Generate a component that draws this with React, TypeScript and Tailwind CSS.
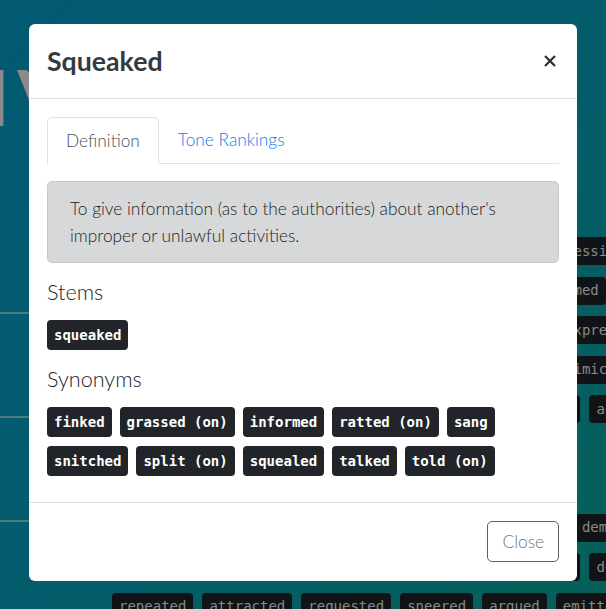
import React from "react";

const bgRows: string[][] = [
  ["considered", "remembered", "understood", "discovered", "necessitated"],
  ["acknowledged", "mentioned", "whispered", "announced", "claimed", "added"],
  ["recommended", "interrupted", "understood", "considered", "expressed"],
  ["demonstrated", "questioned", "reported", "contemplated", "mimicked"],
  ["acknowledged", "concluded", "observed", "remarked", "stated", "agreed"],
  ["said", "asked", "replied", "shouted"],
  ["noted", "warned", "begged"],
  ["recommended", "demonstrated", "interrupted", "questioned", "demanded"],
  ["asked", "noticed", "communicated", "subscribed", "described", "decided"],
  ["repeated", "attracted", "requested", "sneered", "argued", "emitted"],
];

const stems = ["squeaked"];
const synonyms = [
  "finked",
  "grassed (on)",
  "informed",
  "ratted (on)",
  "sang",
  "snitched",
  "split (on)",
  "squealed",
  "talked",
  "told (on)",
];

function Badge({ text }: { text: string }) {
  return (
    <span className="h-[30px] px-[7px] flex items-center rounded-[4px] bg-[#212529] text-white font-bold text-[14px] leading-none whitespace-pre font-['DejaVu_Sans_Mono',monospace]">
      {text}
    </span>
  );
}

export default function App() {
  return (
    <div className="relative w-[606px] h-[609px] overflow-hidden bg-[linear-gradient(135deg,#025a73_0%,#035c6c_50%,#066058_100%)] font-['Lato',sans-serif]">
      {/* background page (dimmed) */}
      <div className="flex h-full">
        <div className="w-[104px] shrink-0 flex flex-col">
          <div className="h-[314px] border-b-2 border-[#4f7a82] pt-[52px] overflow-hidden">
            <div className="ml-[-13px] text-[76px] leading-[90px] font-bold tracking-[8px] text-[#8a8a8a] whitespace-nowrap">
              IV
            </div>
          </div>
          <div className="h-[104px] border-b-2 border-[#4f7a82]" />
          <div className="h-[104px] border-b-2 border-[#4f7a82]" />
        </div>
        <div className="ml-[8px] flex-1 min-w-0 pt-[237px] flex flex-col gap-[11.5px]">
          {bgRows.map((row, i) => (
            <div key={i} className="flex gap-[9px] whitespace-nowrap">
              {row.map((w, j) => (
                <span
                  key={j}
                  className="h-[28px] px-[7px] shrink-0 flex items-center rounded-[4px] bg-[#111416] text-[#8a8a8a] text-[14px] font-['DejaVu_Sans_Mono',monospace]"
                >
                  {w}
                </span>
              ))}
            </div>
          ))}
        </div>
      </div>

      {/* modal */}
      <div className="absolute inset-0 flex justify-center pt-[24px]">
        <div className="w-[548px] h-fit bg-white rounded-[6px] flex flex-col">
          <div className="flex items-center justify-between px-[18px] py-[18px] border-b border-[#dee2e6]">
            <h5 className="text-[26.7px] leading-[38px] font-bold text-[#343a40]">Squeaked</h5>
            <button className="w-[16px] h-[16px] flex items-center justify-center mr-[1px]">
              <svg width="12" height="12" viewBox="0 0 12 12">
                <path d="M1 1 L11 11 M11 1 L1 11" stroke="#2a2e33" strokeWidth="2.2" strokeLinecap="butt" />
              </svg>
            </button>
          </div>

          <div className="px-[18px] pt-[18px] pb-[18px]">
            <div className="flex border-b border-[#dee2e6]">
              <div className="-mb-px h-[47px] px-[18px] flex items-center border border-[#dee2e6] border-b-white rounded-t-[5px] bg-white text-[17.3px] font-light text-[#495057]">
                Definition
              </div>
              <div className="h-[46px] px-[19px] flex items-center text-[17.3px] font-light text-[#1479e6]">
                Tone Rankings
              </div>
            </div>

            <div className="mt-[17px] border border-[#c6c8ca] bg-[#d6d8d9] rounded-[5px] px-[22px] pt-[13px] pb-[13px] text-[17.3px] leading-[27px] font-light text-[#1b1e21]">
              To give information (as to the authorities) about another's improper or unlawful activities.
            </div>

            <h5 className="mt-[17px] mb-[15px] text-[21.6px] leading-[25px] font-light text-[#212529]">Stems</h5>
            <div className="flex flex-wrap gap-x-[8px] gap-y-[9px] mb-[17px]">
              {stems.map((s) => (
                <Badge key={s} text={s} />
              ))}
            </div>

            <h5 className="mb-[15px] text-[21.6px] leading-[25px] font-light text-[#212529]">Synonyms</h5>
            <div className="flex flex-wrap gap-x-[8px] gap-y-[9px] mb-[8px]">
              {synonyms.map((s) => (
                <Badge key={s} text={s} />
              ))}
            </div>
          </div>

          <div className="flex justify-end border-t border-[#dee2e6] px-[18px] pt-[18px] pb-[19px]">
            <button className="h-[41px] px-[14px] rounded-[5px] border border-[#5a6066] text-[17.3px] font-light text-[#6c757d]">
              Close
            </button>
          </div>
        </div>
      </div>
    </div>
  );
}
